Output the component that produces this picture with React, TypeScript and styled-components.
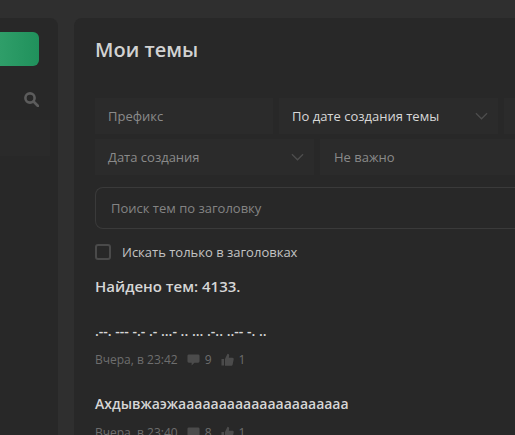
import React from 'react';
import styled, { createGlobalStyle } from 'styled-components';

const GlobalStyle = createGlobalStyle`
  html, body {
    margin: 0;
    width: 515px;
    height: 435px;
    overflow: hidden;
    background: #2f2f2f;
    font-family: "Open Sans", "Noto Sans", sans-serif;
  }
`;

const Page = styled.div`
  display: flex;
  gap: 16px;
  width: 515px;
  height: 435px;
  padding-top: 18px;
  box-sizing: border-box;
  overflow: hidden;
`;

const Sidebar = styled.aside`
  width: 58px;
  flex: none;
  background: #282828;
  border-radius: 0 8px 0 0;
  padding: 14px 19px 0 0;
  box-sizing: border-box;
`;

const CreateButton = styled.div`
  height: 34px;
  border-radius: 0 6px 6px 0;
  background: linear-gradient(90deg, #2f9e69, #20915c);
`;

const SidebarSearch = styled.div`
  display: flex;
  justify-content: flex-end;
  align-items: center;
  height: 24px;
  margin-top: 21px;
  color: #5c5c5c;
`;

const SidebarRow = styled.div`
  height: 36px;
  margin: 9px -11px 0 0;
  background: #2a2a2a;
`;

const Main = styled.main`
  flex: 1;
  min-width: 0;
  background: #282828;
  border-radius: 8px 0 0 0;
  padding: 18px 0 0 21px;
  overflow: hidden;
`;

const Title = styled.h1`
  margin: 0;
  font-size: 20px;
  line-height: 27px;
  font-weight: 600;
  color: #d2d2d2;
`;

const FilterRow = styled.div`
  display: flex;
  gap: 6px;
  width: 440px;
  margin-top: ${p => p.$top}px;
`;

const Field = styled.div`
  display: flex;
  align-items: center;
  justify-content: space-between;
  flex: none;
  width: ${p => p.$w}px;
  height: 36px;
  padding: 0 10px 0 ${p => p.$left ?? 13}px;
  box-sizing: border-box;
  background: #2b2b2b;
  font-size: 13px;
  color: ${p => (p.$active ? '#d8d8d8' : '#8a8a8a')};
`;

const Chevron = styled.svg`
  width: 13px;
  height: 8px;
  fill: none;
  stroke: #4d4d4d;
  stroke-width: 1.4;
`;

const SearchBox = styled.div`
  display: flex;
  align-items: center;
  width: 440px;
  height: 42px;
  margin-top: 12px;
  padding-left: 15px;
  box-sizing: border-box;
  border: 1px solid #3a3a3a;
  border-right: none;
  border-radius: 8px 0 0 8px;
  font-size: 13px;
  color: #848484;
`;

const CheckRow = styled.label`
  display: flex;
  align-items: center;
  gap: 11px;
  margin-top: 14px;
  font-size: 13px;
  line-height: 18px;
  color: #c4c4c4;
`;

const Box = styled.span`
  width: 16px;
  height: 16px;
  box-sizing: border-box;
  border: 2px solid #4a4a4a;
  border-radius: 3px;
`;

const Found = styled.div`
  margin-top: 15px;
  font-size: 15px;
  line-height: 20px;
  font-weight: 600;
  color: #d6d6d6;
`;

const ThreadTitle = styled.div`
  margin-top: ${p => p.$top}px;
  font-size: 14px;
  line-height: 20px;
  font-weight: 600;
  color: #d6d6d6;
  white-space: nowrap;
`;

const Meta = styled.div`
  display: flex;
  align-items: center;
  margin-top: 9px;
  height: 18px;
  font-size: 12px;
  color: #6e6e6e;
`;

const Stat = styled.span`
  display: inline-flex;
  align-items: center;
  gap: 5px;
  margin-left: 9px;
`;

const Glyph = styled.svg`
  width: 13px;
  height: 13px;
  fill: #4b4b4b;
`;

const SearchIcon = () => (
  <svg width="15" height="15" viewBox="0 0 15 15" fill="none" stroke="currentColor" strokeWidth="2.6">
    <circle cx="6" cy="6" r="4.6" />
    <path d="M9.500 9.500l4.500 4.500" strokeLinecap="round" />
  </svg>
);

const Down = () => (
  <Chevron viewBox="0 0 14 8">
    <path d="M1 1l6 6 6-6" />
  </Chevron>
);

const Comment = () => (
  <Glyph viewBox="0 0 14 14">
    <path d="M2 1.500h10a1.500 1.500 0 0 1 1.500 1.500v6a1.500 1.500 0 0 1-1.500 1.500H8l-3 3v-3H2A1.500 1.500 0 0 1 .5 9V3A1.500 1.500 0 0 1 2 1.500z" />
  </Glyph>
);

const Thumb = () => (
  <Glyph viewBox="0 0 14 14">
    <path d="M.5 6.500h2.800v7H.5zM4.300 6.500L7 .8c1.300 0 2 1 1.800 2.200L8.400 5h4c1 0 1.500.9 1.300 1.700l-1.200 5.900c-.2.600-.7 1-1.300 1H4.300z" />
  </Glyph>
);

const threads = [
  { title: '.--. --- -.- .- ...- .. ... .-.. ..-- -. ..', time: 'Вчера, в 23:42', replies: 9, likes: 1, top: 25 },
  { title: 'Ахдывжаэжааааааааааааааааааааа', time: 'Вчера, в 23:40', replies: 8, likes: 1, top: 26 },
];

const App: React.FC = () => {
  return (
    <Page>
      <GlobalStyle />
      <Sidebar>
        <CreateButton />
        <SidebarSearch>
          <SearchIcon />
        </SidebarSearch>
        <SidebarRow />
      </Sidebar>
      <Main>
        <Title>Мои темы</Title>
        <FilterRow $top={35}>
          <Field $w={178}>Префикс</Field>
          <Field $w={219} $active>
            По дате создания темы
            <Down />
          </Field>
          <Field $w={40} />
        </FilterRow>
        <FilterRow $top={5}>
          <Field $w={219}>
            Дата создания
            <Down />
          </Field>
          <Field $w={200} $left={14}>Не важно</Field>
        </FilterRow>
        <SearchBox>Поиск тем по заголовку</SearchBox>
        <CheckRow>
          <Box />
          Искать только в заголовках
        </CheckRow>
        <Found>Найдено тем: 4133.</Found>
        {threads.map(t => (
          <div key={t.time}>
            <ThreadTitle $top={t.top}>{t.title}</ThreadTitle>
            <Meta>
              {t.time}
              <Stat>
                <Comment />
                {t.replies}
              </Stat>
              <Stat>
                <Thumb />
                {t.likes}
              </Stat>
            </Meta>
          </div>
        ))}
      </Main>
    </Page>
  );
};

export default App;
